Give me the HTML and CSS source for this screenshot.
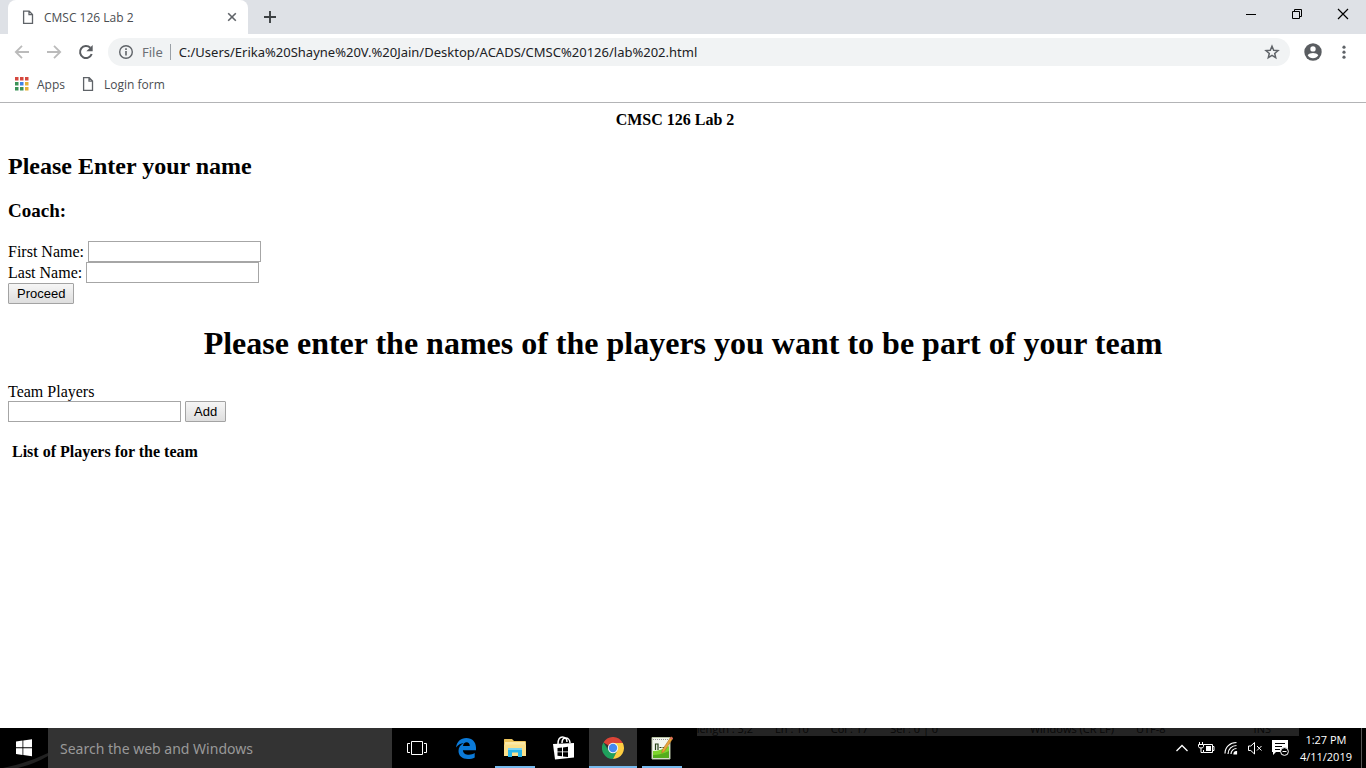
FILE: index.html
```html
<!DOCTYPE html>
<html lang="en">
<head>
<meta charset="utf-8">
<title>CMSC 126 Lab 2</title>
<link rel="stylesheet" href="styles.css">
</head>
<body>
<header class="browser">
  <div class="tab-strip">
    <div class="tab">
      <svg class="icon" width="16" height="16" viewBox="0 0 16 16" fill="none" stroke="#5f6368" stroke-width="1.3"><path d="M3.6 2.2h5.6l3.3 3.3v8.8H3.6zM9 2.2v3.5h3.5"/></svg>
      <span class="tab-title">CMSC 126 Lab 2</span>
      <button class="plain tab-close" aria-label="Close tab"><svg width="10" height="10" viewBox="0 0 10 10" stroke="#5f6368" stroke-width="1.6"><path d="M1.2 1.2l7.6 7.6M8.8 1.2L1.2 8.8"/></svg></button>
    </div>
    <button class="plain new-tab" aria-label="New tab"><svg width="12" height="12" viewBox="0 0 12 12" stroke="#3c4043" stroke-width="1.9"><path d="M6 0v12M0 6h12"/></svg></button>
    <div class="window-controls">
      <button class="plain" aria-label="Minimize"><svg width="12" height="12" viewBox="0 0 12 12" stroke="#000"><path d="M1 6.5h10"/></svg></button>
      <button class="plain" aria-label="Restore"><svg width="12" height="12" viewBox="0 0 12 12" stroke="#000" fill="none"><path d="M1.5 3.5h7v7h-7zM3.5 3.5v-2h7v7h-2"/></svg></button>
      <button class="plain" aria-label="Close"><svg width="12" height="12" viewBox="0 0 12 12" stroke="#000" stroke-width="1.2"><path d="M1 1l10 10M11 1L1 11"/></svg></button>
    </div>
  </div>
  <div class="toolbar">
    <button class="plain" aria-label="Back"><svg width="16" height="16" viewBox="0 0 16 16" fill="none" stroke="#bbb" stroke-width="1.8"><path d="M15 8H2.5M8 1.8L1.8 8 8 14.2"/></svg></button>
    <button class="plain" aria-label="Forward"><svg width="16" height="16" viewBox="0 0 16 16" fill="none" stroke="#bbb" stroke-width="1.8"><path d="M1 8h12.5M8 1.8L14.2 8 8 14.2"/></svg></button>
    <button class="plain" aria-label="Reload"><svg width="16" height="16" viewBox="0 0 16 16"><path d="M13.7 10A6 6 0 1 1 12.3 3.8" fill="none" stroke="#5a5d61" stroke-width="2"/><path d="M14.7 1v6.3H8.4z" fill="#5a5d61"/></svg></button>
    <div class="omnibox">
      <svg class="icon" width="16" height="16" viewBox="0 0 16 16"><circle cx="8" cy="8" r="6.3" fill="none" stroke="#5f6368" stroke-width="1.4"/><path d="M8 7v4.500M8 4.300v1.600" stroke="#5f6368" stroke-width="1.6"/></svg>
      <span class="scheme">File</span>
      <input class="url" aria-label="Address" value="C:/Users/Erika%20Shayne%20V.%20Jain/Desktop/ACADS/CMSC%20126/lab%202.html">
      <button class="plain" aria-label="Bookmark this page"><svg width="16" height="16" viewBox="0 0 16 16" fill="none" stroke="#5f6368" stroke-width="1.5"><path d="M8 2.200l1.700 4 4.300.4-3.300 2.800 1 4.200L8 11.400l-3.700 2.200 1-4.200L2 6.600l4.300-.4z"/></svg></button>
    </div>
    <button class="plain profile" aria-label="Profile"><svg width="18" height="18" viewBox="0 0 18 18"><circle cx="9" cy="9" r="8.700" fill="#5a5d61"/><circle cx="9" cy="5.900" r="2.700" fill="#fff"/><path d="M3.700 12.300C4.500 10.700 7 10 9 10s4.500.7 5.300 2.300C13.200 14.100 11.200 15.200 9 15.200s-4.200-1.100-5.300-2.900z" fill="#fff"/></svg></button>
    <button class="plain" aria-label="Menu"><svg width="16" height="16" viewBox="0 0 16 16" fill="#5f6368"><circle cx="8" cy="3.200" r="1.600"/><circle cx="8" cy="8.200" r="1.600"/><circle cx="8" cy="13.200" r="1.600"/></svg></button>
  </div>
  <nav class="bookmarks">
    <a href="#apps"><svg width="14" height="14" viewBox="0 0 14 14"><path d="M0 0h3.500v3.500H0zM5 0h3.500v3.500H5zM10 0h3.500v3.500H10z" fill="#d5483e"/><path d="M0 5h3.500v3.500H0zM0 10h3.500v3.500H0zM5 10h3.500v3.500H5z" fill="#3c9358"/><path d="M5 5h3.500v3.500H5z" fill="#3f83e6"/><path d="M10 5h3.500v3.500H10zM10 10h3.500v3.500H10z" fill="#e4af36"/></svg>Apps</a>
    <a href="#login"><svg width="14" height="16" viewBox="2 0 14 16" fill="none" stroke="#5f6368" stroke-width="1.3"><path d="M3.600 1.700h5.600l3.300 3.300v9.300H3.600zM9 1.700v3.500h3.500"/></svg>Login form</a>
  </nav>
</header>

<main class="page">
  <p class="banner">CMSC 126 Lab 2</p>
  <h2>Please Enter your name</h2>
  <h3>Coach:</h3>
  <form>
    <div class="field"><label for="first">First Name:</label><input id="first" class="box" type="text"></div>
    <div class="field"><label for="last">Last Name:</label><input id="last" class="box" type="text"></div>
    <button class="push" type="button">Proceed</button>
  </form>
  <h1>Please enter the names of the players you want to be part of your team</h1>
  <form>
    <label class="players-label" for="player">Team Players</label>
    <div class="field"><input id="player" class="box" type="text"><button class="push" type="button">Add</button></div>
  </form>
  <p class="list-title">List of Players for the team</p>
</main>

<footer class="taskbar">
  <div class="ghost" aria-hidden="true"><span>length : 3,2</span><span>Ln : 10</span><span>Col : 17</span><span class="ghost-grow">Sel : 0 | 0</span><span class="ghost-wide">Windows (CR LF)</span><span class="ghost-wide">UTF-8</span><span>INS</span></div>
  <button class="plain start" aria-label="Start"><svg width="48" height="40" viewBox="0 0 48 40"><path d="M3 40Q28 35 48 25v3Q35 36 18 40z" fill="#222"/><path d="M16 13.500l6.500-.9v6.700H16zM23.300 12.500l8.700-1.200v8H23.300zM16 20.200h6.500v6.700l-6.500-.9zM23.300 20.200H32v8l-8.700-1.200z" fill="#fff"/></svg></button>
  <input class="search" type="text" placeholder="Search the web and Windows" aria-label="Search the web and Windows">
  <div class="apps">
    <button class="plain" aria-label="Task view"><svg width="20" height="16" viewBox="0 0 20 16" fill="none" stroke="#fff"><path d="M4.500 1.500h11v13h-11zM3 3.500H.5v9H3M17 3.500h2.500v9H17"/></svg></button>
    <button class="plain" aria-label="Edge"><svg width="20" height="21" viewBox="0 0 20 21"><path d="M0 9.500C.8 3.700 4.700 0 10.300 0 16.200 0 20 4 20 9.700v2.500H6.900c.2 3.100 2.700 4.500 6 4.500 2.200 0 4.200-.6 5.800-1.600v4.300c-1.700 1-4.200 1.600-6.900 1.600C6.300 21 2.500 17.800 2.500 13c0-3.500 1.900-6.500 5.400-8C4.800 5.200 2 6.700 0 9.500zM7 8.100h6.800c0-2.500-1.200-3.800-3.200-3.800S7.300 5.700 7 8.100z" fill="#0b7ad8"/></svg></button>
    <button class="plain open" aria-label="File Explorer"><svg width="22" height="20" viewBox="0 0 22 20"><path d="M0 1.500Q0 1 .6 1H8l2 2h11q1 0 1 1v14H0z" fill="#edc45c"/><path d="M1 4h20v3H1z" fill="#fbe9a8"/><path d="M0 6.500h22V18H0z" fill="#fbe08a"/><path d="M4 10h14v9h-4v-4.500H8V19H4z" fill="#29b6e8"/><path d="M4 10h14v2H4z" fill="#7bd5f3"/></svg></button>
    <button class="plain" aria-label="Store"><svg width="22" height="24" viewBox="0 0 22 24"><path d="M5 8C5 3 7 1 9.500 1S14 3 14 6M9 7c0-3.500 1.700-5 3.700-5S17 3.500 17 7" fill="none" stroke="#fff" stroke-width="1.5"/><path d="M0 8l21-1v14.500L2 23.500z" fill="#fff"/><path d="M4.500 12l4.500-.5v4H4.500zM10 11.400l5-.6v4.700h-5zM4.500 16.300H9v4l-4.500-.5zM10 16.300h5V21l-5-.6z" fill="#000"/></svg></button>
    <button class="plain open active" aria-label="Chrome"><svg width="22" height="22" viewBox="0 0 22 22"><path d="M11 11L1.470 5.500A11 11 0 0 1 20.530 5.500L20.600 6H11z" fill="#dc4437"/><path d="M11 11L6.700 13.500 1.470 5.500A11 11 0 0 0 11 22l4.300-8.500z" fill="#1fa05c"/><path d="M11 6h9.800A11 11 0 0 1 11 22l4.300-8.500z" fill="#fecd41"/><circle cx="11" cy="11" r="5.200" fill="#f4f4f4"/><circle cx="11" cy="11" r="4.200" fill="#4688f1"/></svg></button>
    <button class="plain open" aria-label="Notepad++"><svg width="22" height="24" viewBox="0 0 22 24"><path d="M1 1.500h18V23H1z" fill="#f4f7ee" stroke="#b7c3a5"/><path d="M2 15q7 0 16-5v12H2z" fill="#7ed52c"/><path d="M2 19q8 0 16-4v7H2z" fill="#54ad1c"/><path d="M2 3.500h16" stroke="#999" stroke-dasharray="1 1"/><path d="M4.500 14V8h2.500v6M8.500 11.500h2M11.500 11.500h2" fill="none" stroke="#244114" stroke-width="1.2"/><path d="M20 .8l2 1.400-8.500 13-2.800 2 .6-3.400z" fill="#e8a43a" stroke="#a66c1c" stroke-width=".5"/><path d="M20 .8l2 1.400-1 1.500-2-1.400z" fill="#df6965"/></svg></button>
  </div>
  <div class="tray">
    <svg width="14" height="10" viewBox="0 0 14 10" fill="none" stroke="#fff" stroke-width="1.3"><path d="M1.500 8L7 2.500 12.500 8"/></svg>
    <svg width="17" height="14" viewBox="0 0 17 14" fill="none" stroke="#fff"><path d="M5.500 3.500h9v8h-9V9M14.500 5.500h1.500v4h-1.500M1.500 1v2M4.500 1v2M.5 3.500h5v2q0 1.500-2.500 1.500T.5 5.500zM3 7v4.500h2.500"/><path d="M8 5h5v5H8z" fill="#fff" stroke="none"/></svg>
    <svg width="14" height="14" viewBox="0 0 14 14" fill="none" stroke="#fff" stroke-width="1.2"><path d="M1 12.500C1 6 6 1.500 12.500 1.500M4 13c0-5 4-8.500 8.500-8.500M7 13c0-3 2.500-5.500 5.500-5.500"/><path d="M10 13q0-2.500 2.500-2.500V13z" fill="#fff"/></svg>
    <svg width="16" height="14" viewBox="0 0 16 14" fill="none" stroke="#fff"><path d="M1.500 5v4.500h2.300L7.500 13V1.500L3.800 5zM10 5l4.500 4.500M14.500 5L10 9.500"/></svg>
    <svg width="17" height="16" viewBox="0 0 17 16"><path d="M0 0h16v12H4l-3 3v-3H0z" fill="#fff"/><path d="M3 3.500h10M3 6.500h7M3 9.500h5" stroke="#000"/><circle cx="12.500" cy="11.500" r="3.900" fill="#000" stroke="#fff"/><path d="M10.500 11.500h4" stroke="#fff"/></svg>
    <div class="clock"><span>1:27 PM</span><span>4/11/2019</span></div>
    <div class="show-desktop"></div>
  </div>
</footer>
</body>
</html>
```
FILE: styles.css
```css
* { box-sizing: border-box; }

body {
  margin: 0;
  min-height: 100vh;
  display: flex;
  flex-direction: column;
  background: #fff;
  color: #000;
  font-family: "Liberation Serif", "Times New Roman", serif;
  font-size: 16px;
}

svg { display: block; flex: none; }

.plain {
  display: flex;
  align-items: center;
  justify-content: center;
  padding: 0;
  border: 0;
  background: none;
}

/* Browser window */
.browser {
  border-bottom: 1px solid #b3b4b6;
  font-family: "Open Sans", "Noto Sans", sans-serif;
  font-size: 12px;
  color: #4a4d51;
}

.tab-strip {
  display: flex;
  height: 34px;
  padding-left: 8px;
  background: #dee1e6;
}

.tab {
  display: flex;
  align-items: center;
  width: 240px;
  padding: 0 11px 0 12px;
  gap: 8px;
  border-radius: 8px 8px 0 0;
  background: #fff;
}

.tab-title { flex: 1; }
.new-tab { width: 44px; }
.window-controls { display: flex; margin-left: auto; padding-bottom: 6px; }
.window-controls .plain { width: 46px; }

.toolbar {
  display: flex;
  align-items: center;
  height: 36px;
  padding: 0 14px;
  gap: 14px;
}

.toolbar > .plain:not(.profile) + .plain { margin-left: 2px; }

.omnibox {
  flex: 1;
  display: flex;
  align-items: center;
  height: 28px;
  padding: 0 10px;
  gap: 8px;
  border-radius: 14px;
  background: #f1f3f4;
  font-family: "Noto Sans", sans-serif;
  font-size: 13px;
}

.scheme {
  padding-right: 7px;
  border-right: 1px solid #9aa0a6;
  line-height: 16px;
  color: #6b6f74;
}

.url {
  flex: 1;
  min-width: 0;
  padding: 0;
  border: 0;
  background: none;
  font: inherit;
  color: #202124;
}

.bookmarks {
  display: flex;
  align-items: center;
  height: 32px;
  padding: 0 15px 4px;
  gap: 17px;
}

.bookmarks a {
  display: flex;
  align-items: center;
  gap: 8px;
  color: inherit;
  text-decoration: none;
}

/* Document */
.page { flex: 1; padding: 8px; }

.banner {
  margin: 0;
  padding-right: 16px;
  line-height: 18px;
  text-align: center;
  font-weight: bold;
}

h2 { margin: 24px 0 20px; font-size: 24px; line-height: 27px; }
h3 { margin: 0 0 20px; font-size: 19px; line-height: 21px; }
h1 { margin: 21px 0; font-size: 32px; line-height: 37px; text-align: center; }

.field { display: flex; gap: 4px; line-height: 21px; }

.box {
  width: 173px;
  height: 21px;
  padding: 1px;
  border: 1px solid #a6a6a6;
  background: #fff;
}

.push {
  display: block;
  height: 21px;
  padding: 0 8px;
  border: 1px solid #a3a3a3;
  border-radius: 1px;
  background: linear-gradient(#f6f6f6, #dedede);
  font: 13px/17px "Liberation Sans", Arial, sans-serif;
  color: #000;
}

.players-label { display: block; line-height: 18px; }
.list-title { margin: 21px 4px; line-height: 18px; font-weight: bold; }

/* Taskbar */
.taskbar {
  position: relative;
  display: flex;
  height: 40px;
  background: #000;
  font-family: "Open Sans", "Noto Sans", sans-serif;
}

.start { width: 48px; }

.search {
  width: 344px;
  padding: 0 12px;
  border: 0;
  background: #333;
  font: 14px "Noto Sans", sans-serif;
  color: #fff;
}

.search::placeholder { color: #999; opacity: 1; }

.apps { display: flex; gap: 1px; padding-left: 1px; }
.apps .plain { width: 48px; }

.open {
  background: linear-gradient(#76b9ed, #76b9ed) bottom / 40px 2px no-repeat;
}

.active {
  background-color: #333;
  background-size: 48px 2px;
}

.tray {
  display: flex;
  align-items: center;
  margin-left: auto;
  gap: 9px;
}

.clock {
  display: flex;
  flex-direction: column;
  align-items: center;
  padding-left: 2px;
  font-size: 11px;
  line-height: 17px;
  color: #fff;
}

.show-desktop {
  align-self: stretch;
  width: 5px;
  border-left: 1px solid #555;
}

/* Status bar showing faintly through the taskbar */
.ghost {
  position: absolute;
  top: 0;
  left: 51%;
  right: 67px;
  display: flex;
  gap: 22px;
  height: 8px;
  overflow: hidden;
  background: #242424;
  font-size: 11px;
  line-height: 1px;
  white-space: nowrap;
  color: #080808;
}

.ghost-grow { flex: 1; }
.ghost span:last-child { padding: 0 28px 0 66px; }
```
